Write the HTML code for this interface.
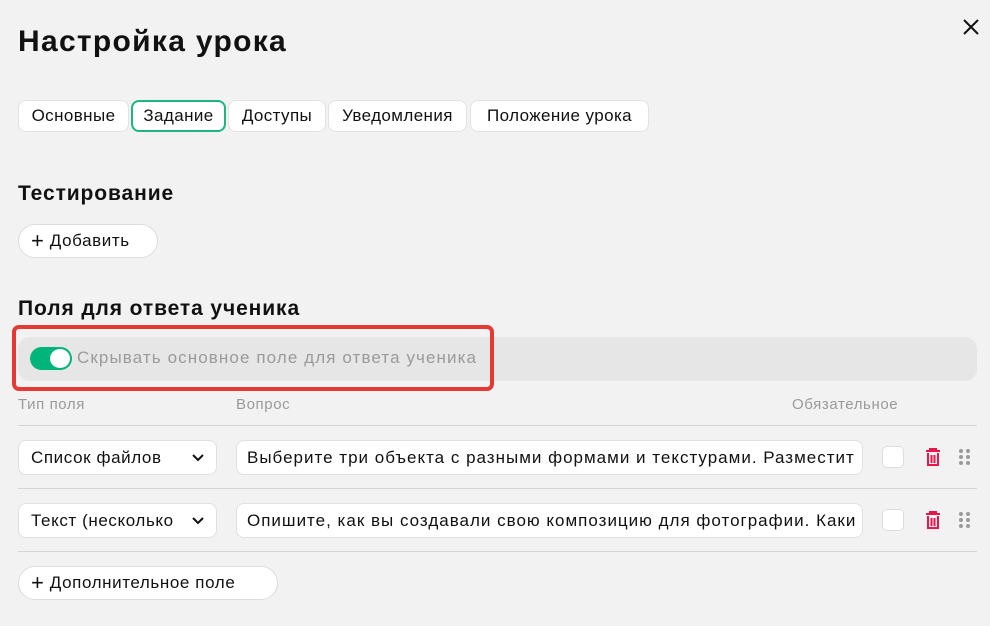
<!DOCTYPE html><html><head><meta charset="utf-8"><style>
*{box-sizing:border-box;margin:0;padding:0}
body{width:990px;height:626px;background:#f2f2f2;font-family:"Liberation Sans",sans-serif;color:#111;position:relative;overflow:hidden;letter-spacing:0.6px}
.a{position:absolute}
.tab{position:absolute;top:100px;height:32px;background:#fff;border:1px solid #e2e2e2;border-radius:8px;font-size:17px;line-height:30px;text-align:center;white-space:nowrap;letter-spacing:0.4px}
.btn{position:absolute;background:#fff;border:1px solid #dcdcdc;border-radius:18px;font-size:17px;white-space:nowrap;padding-left:12px}
.box{position:absolute;background:#fff;border:1px solid #e0e0e0;border-radius:8px;font-size:17px;white-space:nowrap;overflow:hidden;padding-left:12px}
.line{position:absolute;left:18px;width:959px;height:1px;background:#d4d4d4}
.lbl{position:absolute;top:396px;font-size:15px;color:#9a9a9a}
.cb{position:absolute;left:882px;width:22px;height:22px;background:#fff;border:1px solid #ddd;border-radius:5px}
h{font-weight:bold;position:absolute;font-size:21px;letter-spacing:0.9px;left:18px}
</style></head><body>
<div class="a" style="left:18px;top:25px;font-size:30px;font-weight:bold;letter-spacing:1.3px">Настройка урока</div>
<svg class="a" style="left:962px;top:18px" width="18" height="18"><path d="M2 2L16 16M16 2L2 16" stroke="#111" stroke-width="2"/></svg>
<div class="tab" style="left:18px;width:111px">Основные</div>
<div class="tab" style="left:131px;width:95px;border:2px solid #1db584;line-height:28px">Задание</div>
<div class="tab" style="left:228px;width:98px">Доступы</div>
<div class="tab" style="left:328px;width:139px">Уведомления</div>
<div class="tab" style="left:470px;width:179px">Положение урока</div>
<h style="top:182px">Тестирование</h>
<div class="btn" style="left:18px;top:224px;width:140px;height:34px;line-height:32px"><span style="font-size:22px;vertical-align:-2px">+</span> Добавить</div>
<h style="top:297px">Поля для ответа ученика</h>
<div class="a" style="left:18px;top:337px;width:959px;height:44px;background:#e6e6e6;border-radius:12px"></div>
<div class="a" style="left:12px;top:325px;width:482px;height:66px;border:4px solid #e53935;border-radius:7px"></div>
<div class="a" style="left:30px;top:347px;width:42px;height:23px;background:#00b57a;border-radius:12px"></div>
<div class="a" style="left:50px;top:349px;width:20px;height:19px;background:#fff;border-radius:50%"></div>
<div class="a" style="left:77px;top:348px;font-size:17px;color:#9a9a9a;letter-spacing:1.1px">Скрывать основное поле для ответа ученика</div>
<div class="lbl" style="left:18px">Тип поля</div>
<div class="lbl" style="left:236px">Вопрос</div>
<div class="lbl" style="left:792px">Обязательное</div>
<div class="line" style="top:425px"></div>
<div class="box" style="left:18px;top:440px;width:199px;height:35px;line-height:33px">Список файлов<svg class="a" style="right:12px;top:13px" width="12" height="8"><path d="M1 1L6 6L11 1" stroke="#111" stroke-width="2" fill="none"/></svg></div>
<div class="box" style="left:236px;top:440px;width:627px;height:35px;line-height:33px;padding-left:10px;letter-spacing:1px">Выберите три объекта с разными формами и текстурами. Разместит</div>
<div class="cb" style="top:446px"></div>
<svg class="a" style="left:924px;top:447px" width="18" height="20"><path d="M2 4H16M6 4V2H12V4M4 6V18H14V6M7.5 8V16M10.5 8V16" stroke="#e8174a" stroke-width="2" fill="none"/></svg>
<svg class="a" style="left:958px;top:448px" width="14" height="18" fill="#9a9a9a"><circle cx="3" cy="3" r="2"/><circle cx="10" cy="3" r="2"/><circle cx="3" cy="9" r="2"/><circle cx="10" cy="9" r="2"/><circle cx="3" cy="15" r="2"/><circle cx="10" cy="15" r="2"/></svg>
<div class="line" style="top:488px"></div>
<div class="box" style="left:18px;top:503px;width:199px;height:35px;line-height:33px">Текст (несколько<svg class="a" style="right:12px;top:13px" width="12" height="8"><path d="M1 1L6 6L11 1" stroke="#111" stroke-width="2" fill="none"/></svg></div>
<div class="box" style="left:236px;top:503px;width:627px;height:35px;line-height:33px;padding-left:10px;letter-spacing:1px">Опишите, как вы создавали свою композицию для фотографии. Каки</div>
<div class="cb" style="top:509px"></div>
<svg class="a" style="left:924px;top:510px" width="18" height="20"><path d="M2 4H16M6 4V2H12V4M4 6V18H14V6M7.5 8V16M10.5 8V16" stroke="#e8174a" stroke-width="2" fill="none"/></svg>
<svg class="a" style="left:958px;top:511px" width="14" height="18" fill="#9a9a9a"><circle cx="3" cy="3" r="2"/><circle cx="10" cy="3" r="2"/><circle cx="3" cy="9" r="2"/><circle cx="10" cy="9" r="2"/><circle cx="3" cy="15" r="2"/><circle cx="10" cy="15" r="2"/></svg>
<div class="line" style="top:551px"></div>
<div class="btn" style="left:18px;top:566px;width:260px;height:34px;line-height:32px"><span style="font-size:22px;vertical-align:-2px">+</span> Дополнительное поле</div>
</body></html>
